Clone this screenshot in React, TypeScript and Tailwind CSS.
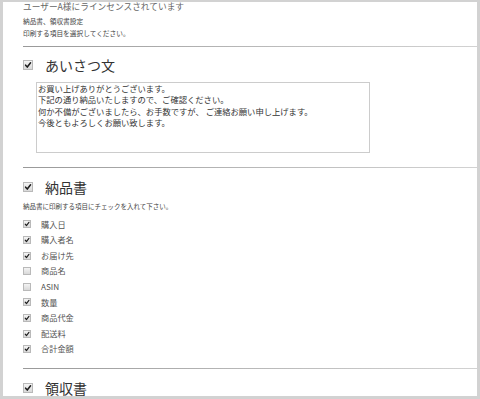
import React from "react";

const FONT = { fontFamily: '"Noto Sans CJK JP", "Noto Sans", sans-serif' };

function Box({ checked, size }: { checked: boolean; size: number }) {
  return (
    <span
      className="inline-flex shrink-0 items-center justify-center border border-[#b9b9b9] bg-linear-to-b from-[#f4f4f4] to-[#d9d9d9]"
      style={{ width: size, height: size }}
    >
      {checked && (
        <svg viewBox="0 0 10 10" width={size - 2} height={size - 2}>
          <path d="M2 5.2 L4.1 7.6 L8.2 2.2" fill="none" stroke="#1e1e1e" strokeWidth="1.9" strokeLinecap="round" strokeLinejoin="round" />
        </svg>
      )}
    </span>
  );
}

function Hr({ mt }: { mt: string }) {
  return <div className={`${mt} h-px bg-linear-to-r from-[#999999] via-[#b8b8b8] to-[#d2d2d2]`} />;
}

function Heading({ label, mt }: { label: string; mt: string }) {
  return (
    <div className={`${mt} flex h-[24px] items-center`}>
      <Box checked size={10} />
      <span className="ml-[12px] text-[14px] leading-[24px] text-[#333]">{label}</span>
    </div>
  );
}

const items: [string, boolean][] = [
  ["購入日", true],
  ["購入者名", true],
  ["お届け先", true],
  ["商品名", false],
  ["ASIN", false],
  ["数量", true],
  ["商品代金", true],
  ["配送料", true],
  ["合計金額", true],
];

export default function App() {
  return (
    <div className="h-[399px] w-[480px] bg-[#d2d2d2] pb-[3px] pl-[3px] pr-[3px] pt-[2px]" style={FONT}>
      <div className="h-full w-full overflow-hidden bg-white pl-[20px]">
        <div className="h-[10px] text-[8.7px] leading-[10px] text-[#666]">ユーザーA様にラインセンスされています</div>
        <div className="mt-[3px] h-[12px] text-[6.7px] leading-[12px] text-[#444]">納品書、領収書設定</div>
        <div className="h-[12px] text-[6.7px] leading-[12px] text-[#444]">印刷する項目を選択してください。</div>
        <Hr mt="mt-[7px]" />
        <Heading label="あいさつ文" mt="mt-[6px]" />
        <div className="ml-[13px] mt-[5px] h-[71px] w-[334px] border border-[#cccccc] pl-[1px] text-[8.3px] leading-[11.3px] text-[#333]">
          <div>お買い上げありがとうございます。</div>
          <div>下記の通り納品いたしますので、ご確認ください。</div>
          <div>何か不備がございましたら、お手数ですが、 ご連絡お願い申し上げます。</div>
          <div>今後ともよろしくお願い致します。</div>
        </div>
        <Hr mt="mt-[14px]" />
        <Heading label="納品書" mt="mt-[7px]" />
        <div className="mt-[2px] h-[10px] text-[6.5px] leading-[10px] text-[#444]">納品書に印刷する項目にチェックを入れて下さい。</div>
        <div className="mt-[5.7px] flex flex-col">
          {items.map(([label, checked]) => (
            <div key={label} className="flex h-[15.6px] items-center">
              <Box checked={checked} size={8} />
              <span className="ml-[10px] text-[8.2px] leading-[15.6px] text-[#555]">{label}</span>
            </div>
          ))}
        </div>
        <Hr mt="mt-[11px]" />
        <Heading label="領収書" mt="mt-[7px]" />
      </div>
    </div>
  );
}
